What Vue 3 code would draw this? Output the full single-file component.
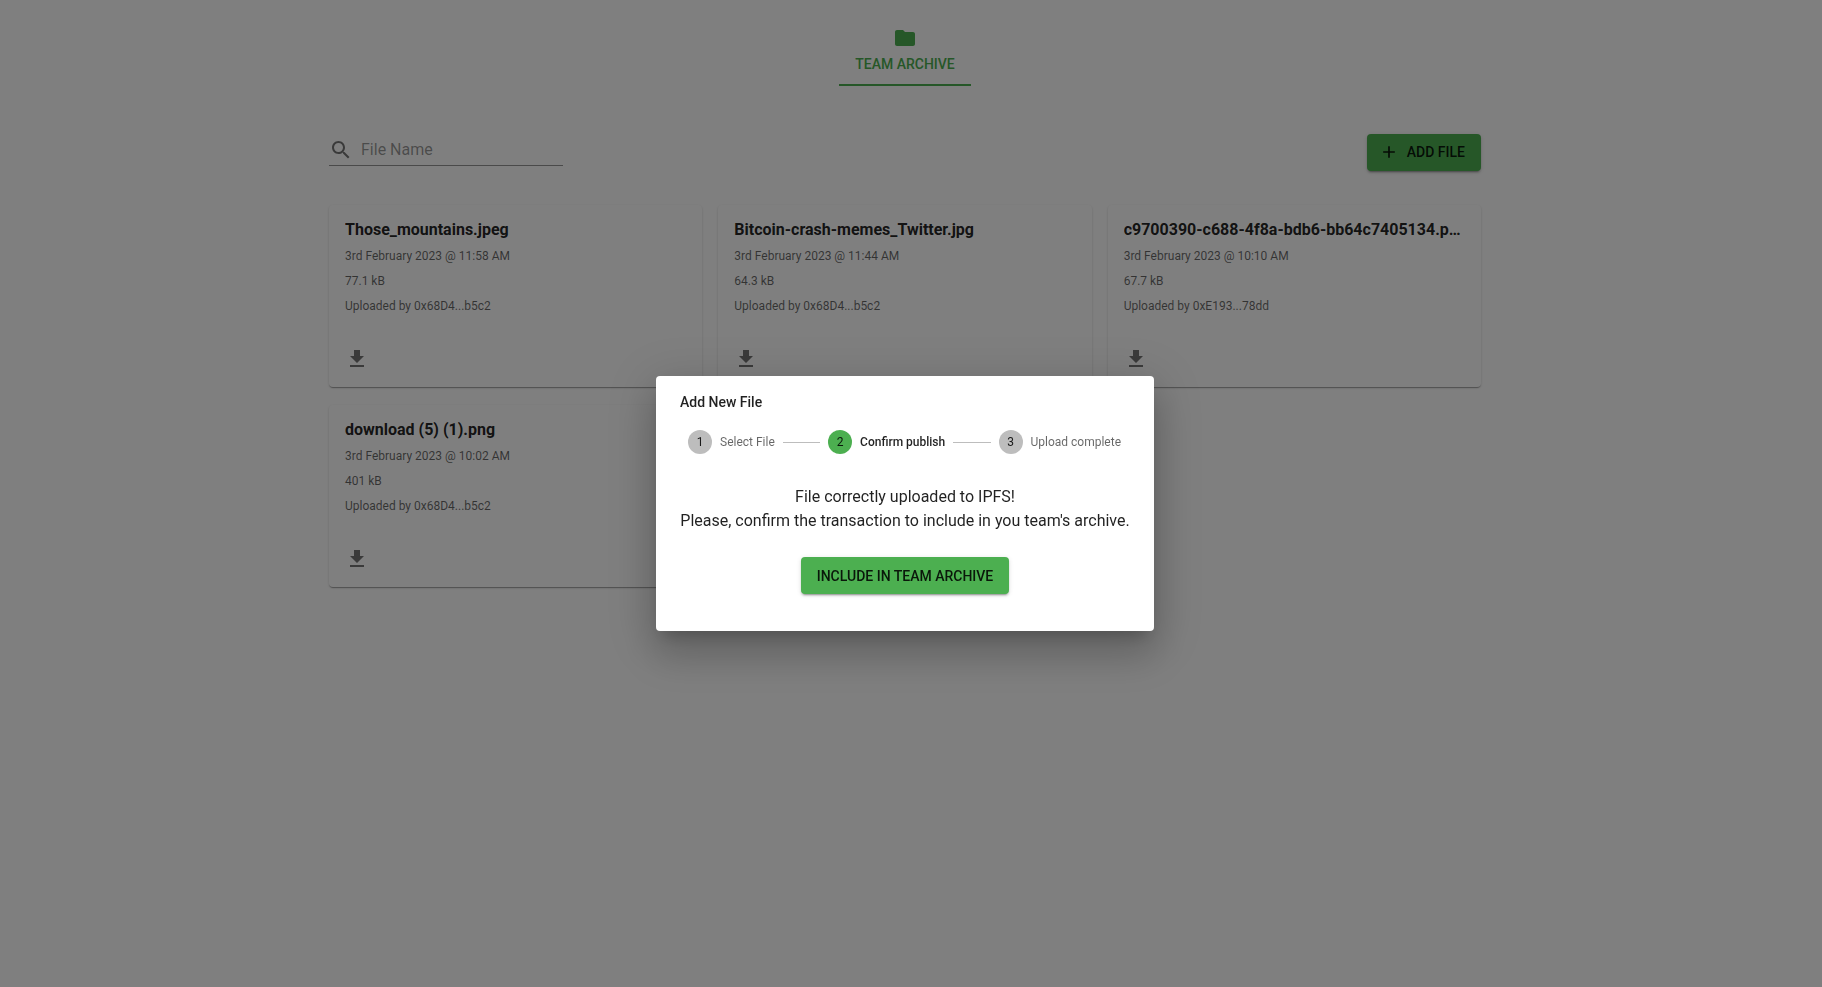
<template>
  <div class="page">
    <div class="tabs">
      <div class="tab">
        <svg class="tab-icon" viewBox="0 0 24 24"><path d="M10 4H4c-1.1 0-1.99.9-1.99 2L2 18c0 1.1.9 2 2 2h16c1.1 0 2-.9 2-2V8c0-1.1-.9-2-2-2h-8l-2-2z" /></svg>
        <span>Team Archive</span>
      </div>
    </div>

    <div class="container">
      <div class="toolbar">
        <div class="search">
          <svg class="search-icon" viewBox="0 0 24 24"><path d="M15.5 14h-.79l-.28-.27C15.41 12.59 16 11.11 16 9.5 16 5.91 13.09 3 9.5 3S3 5.91 3 9.5 5.91 16 9.5 16c1.61 0 3.09-.59 4.23-1.57l.27.28v.79l5 4.99L20.49 19l-4.99-5zm-6 0C7.01 14 5 11.99 5 9.5S7.01 5 9.5 5 14 7.01 14 9.5 11.99 14 9.5 14z" /></svg>
          <span class="placeholder">File Name</span>
        </div>
        <button class="add-btn">
          <svg class="plus" viewBox="0 0 24 24"><path d="M19 13h-6v6h-2v-6H5v-2h6V5h2v6h6v2z" /></svg>
          Add file
        </button>
      </div>

      <div class="grid">
        <div v-for="file in files" :key="file.name" class="card">
          <div class="card-body">
            <div class="card-title">{{ file.name }}</div>
            <p class="meta">{{ file.date }}</p>
            <p class="meta">{{ file.size }}</p>
            <p class="meta">Uploaded by {{ file.by }}</p>
          </div>
          <div class="card-actions">
            <svg class="download" viewBox="0 0 24 24"><path d="M19 9h-4V3H9v6H5l7 7 7-7zM5 18v2h14v-2H5z" /></svg>
          </div>
        </div>
      </div>
    </div>

    <div class="backdrop"></div>
    <div class="dialog-wrap">
      <div class="dialog">
        <h2 class="dialog-title">Add New File</h2>
        <div class="stepper">
          <template v-for="(step, i) in steps" :key="step.label">
            <div v-if="i > 0" class="connector"></div>
            <div class="step">
              <span class="step-num" :class="{ active: step.active }">{{ i + 1 }}</span>
              <span class="step-label" :class="{ active: step.active }">{{ step.label }}</span>
            </div>
          </template>
        </div>
        <div class="dialog-text">
          <div>File correctly uploaded to IPFS!</div>
          <div>Please, confirm the transaction to include in you team's archive.</div>
        </div>
        <button class="confirm-btn">Include in team archive</button>
      </div>
    </div>
  </div>
</template>

<script setup>
const files = [
  { name: 'Those_mountains.jpeg', date: '3rd February 2023 @ 11:58 AM', size: '77.1 kB', by: '0x68D4...b5c2' },
  { name: 'Bitcoin-crash-memes_Twitter.jpg', date: '3rd February 2023 @ 11:44 AM', size: '64.3 kB', by: '0x68D4...b5c2' },
  { name: 'c9700390-c688-4f8a-bdb6-bb64c7405134.png', date: '3rd February 2023 @ 10:10 AM', size: '67.7 kB', by: '0xE193...78dd' },
  { name: 'download (5) (1).png', date: '3rd February 2023 @ 10:02 AM', size: '401 kB', by: '0x68D4...b5c2' },
];

const steps = [
  { label: 'Select File', active: false },
  { label: 'Confirm publish', active: true },
  { label: 'Upload complete', active: false },
];
</script>

<style>
html, body {
  margin: 0;
  background: #fff;
}
</style>

<style scoped>
.page {
  width: 1810px;
  min-height: 987px;
  font-family: Roboto, sans-serif;
  color: rgba(0, 0, 0, 0.87);
}

.tabs {
  display: flex;
  justify-content: center;
  padding-top: 14px;
}

.tab {
  width: 132px;
  height: 72px;
  box-sizing: border-box;
  padding-top: 12px;
  border-bottom: 2px solid #4caf50;
  display: flex;
  flex-direction: column;
  align-items: center;
  font-size: 14px;
  font-weight: 500;
  line-height: 20px;
  text-transform: uppercase;
  color: #4caf50;
}

.tab-icon {
  width: 24px;
  height: 24px;
  fill: #4caf50;
  margin-bottom: 4px;
}

.container {
  width: 1200px;
  box-sizing: border-box;
  padding: 0 24px;
  margin: 48px auto 0;
}

.toolbar {
  display: flex;
  justify-content: space-between;
  align-items: flex-start;
}

.search {
  width: 234px;
  height: 32px;
  box-sizing: border-box;
  border-bottom: 1px solid rgba(0, 0, 0, 0.42);
  display: flex;
  align-items: center;
  font-size: 16px;
}

.search-icon {
  width: 24px;
  height: 24px;
  fill: rgba(0, 0, 0, 0.54);
  margin-right: 8px;
}

.placeholder {
  color: rgba(0, 0, 0, 0.42);
}

.add-btn {
  height: 37px;
  padding: 0 16px 2px;
  border: none;
  border-radius: 4px;
  background: #4caf50;
  color: rgba(0, 0, 0, 0.87);
  font-family: inherit;
  font-size: 14px;
  font-weight: 500;
  text-transform: uppercase;
  display: flex;
  align-items: center;
  box-shadow: 0 3px 1px -2px rgba(0,0,0,0.2), 0 2px 2px 0 rgba(0,0,0,0.14), 0 1px 5px 0 rgba(0,0,0,0.12);
}

.plus {
  width: 20px;
  height: 20px;
  margin-right: 8px;
  margin-left: -4px;
  fill: rgba(0, 0, 0, 0.87);
}

.grid {
  display: grid;
  grid-template-columns: repeat(3, minmax(0, 1fr));
  gap: 18px 16px;
  margin-top: 34px;
}

.card {
  height: 182px;
  display: flex;
  flex-direction: column;
  justify-content: space-between;
  border-radius: 4px;
  background: #fff;
  box-shadow: 0 2px 1px -1px rgba(0,0,0,0.2), 0 1px 1px 0 rgba(0,0,0,0.14), 0 1px 3px 0 rgba(0,0,0,0.12);
}

.card-body {
  padding: 13px 16px 0;
}

.card-title {
  font-size: 16px;
  font-weight: 700;
  line-height: 24px;
  white-space: nowrap;
  overflow: hidden;
  text-overflow: ellipsis;
  margin-bottom: 4px;
}

.meta {
  margin: 0 0 5px;
  font-size: 12px;
  line-height: 20px;
  color: rgba(0, 0, 0, 0.6);
}

.card-actions {
  padding: 0 16px 16px;
  height: 24px;
}

.download {
  display: block;
  width: 24px;
  height: 24px;
  fill: rgba(0, 0, 0, 0.54);
}

.backdrop {
  position: fixed;
  inset: 0;
  background: rgba(0, 0, 0, 0.5);
}

.dialog-wrap {
  position: absolute;
  top: 376px;
  left: 656px;
}

.dialog {
  width: 498px;
  height: 255px;
  box-sizing: border-box;
  padding: 16px 24px;
  background: #fff;
  border-radius: 4px;
  display: flex;
  flex-direction: column;
  align-items: center;
  box-shadow: 0 11px 15px -7px rgba(0,0,0,0.2), 0 24px 38px 3px rgba(0,0,0,0.14), 0 9px 46px 8px rgba(0,0,0,0.12);
}

.dialog-title {
  align-self: flex-start;
  margin: 0;
  font-size: 14px;
  font-weight: 500;
  line-height: 20px;
}

.stepper {
  display: flex;
  align-items: center;
  margin-top: 18px;
  align-self: stretch;
  padding: 0 9px 0 8px;
}

.step {
  display: flex;
  align-items: center;
}

.step-num {
  width: 24px;
  height: 24px;
  border-radius: 50%;
  background: #bdbdbd;
  display: flex;
  align-items: center;
  justify-content: center;
  font-size: 12px;
  color: rgba(0, 0, 0, 0.87);
  margin-right: 8px;
}

.step-num.active {
  background: #4caf50;
}

.step-label {
  font-size: 12px;
  color: rgba(0, 0, 0, 0.6);
}

.step-label.active {
  font-weight: 500;
  color: rgba(0, 0, 0, 0.87);
}

.connector {
  flex: 1;
  margin: 0 8px;
  border-top: 1px solid #bdbdbd;
}

.dialog-text {
  margin-top: 31px;
  font-size: 16px;
  line-height: 24px;
  text-align: center;
  color: rgba(0, 0, 0, 0.87);
}

.confirm-btn {
  margin-top: 24px;
  height: 37px;
  padding: 0 16px;
  border: none;
  border-radius: 4px;
  background: #4caf50;
  color: rgba(0, 0, 0, 0.87);
  font-family: inherit;
  font-size: 14px;
  font-weight: 500;
  text-transform: uppercase;
  box-shadow: 0 3px 1px -2px rgba(0,0,0,0.2), 0 2px 2px 0 rgba(0,0,0,0.14), 0 1px 5px 0 rgba(0,0,0,0.12);
}
</style>
